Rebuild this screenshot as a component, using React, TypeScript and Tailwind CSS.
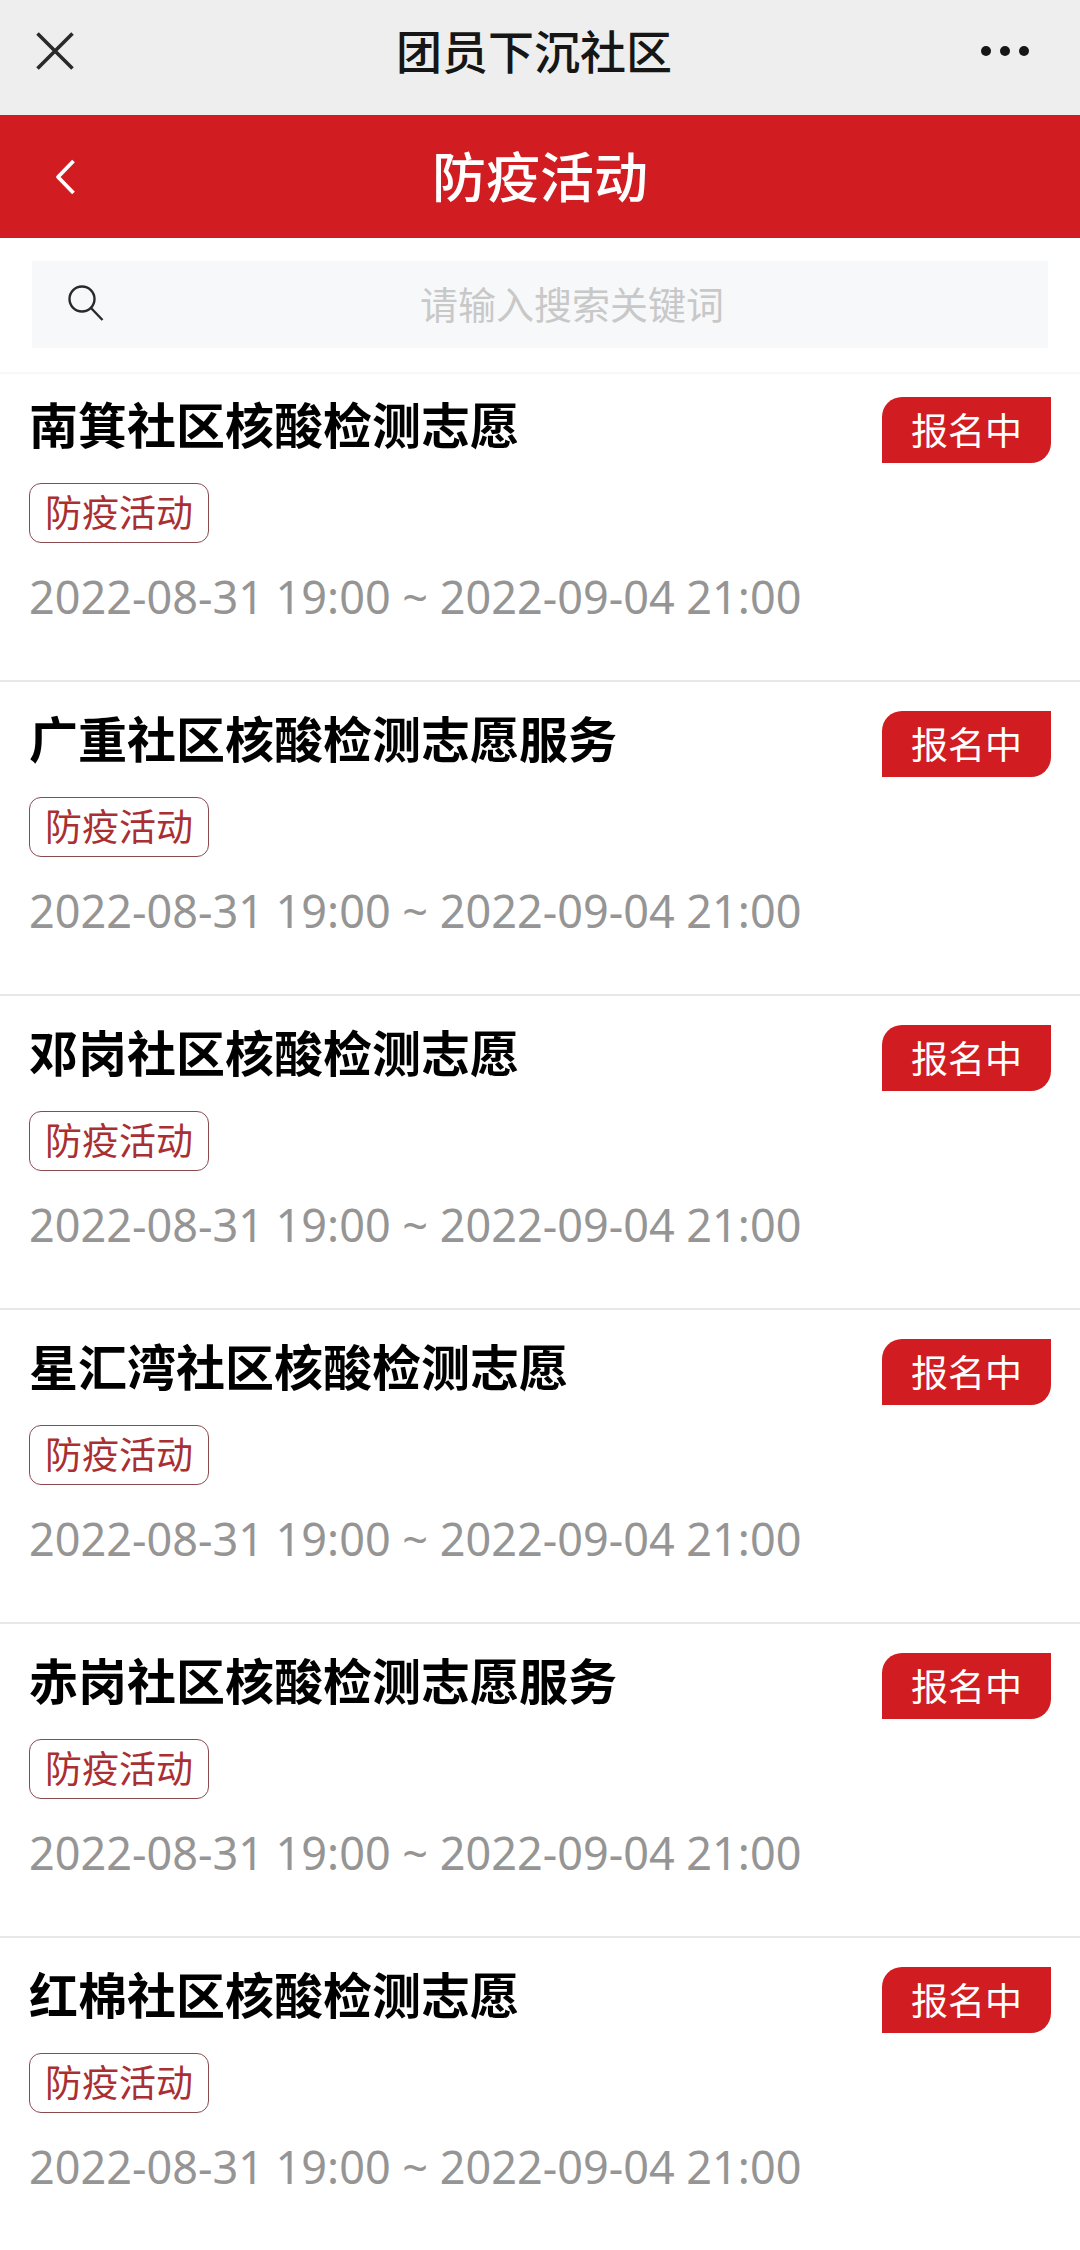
import { useState } from 'react'

const activities = [
  { id: 1, title: '南箕社区核酸检测志愿' },
  { id: 2, title: '广重社区核酸检测志愿服务' },
  { id: 3, title: '邓岗社区核酸检测志愿' },
  { id: 4, title: '星汇湾社区核酸检测志愿' },
  { id: 5, title: '赤岗社区核酸检测志愿服务' },
  { id: 6, title: '红棉社区核酸检测志愿' },
]

function TitleBar() {
  return (
    <header className="grid h-[115px] grid-cols-[1fr_auto_1fr] items-center bg-[#eeeeee] pb-3.5 pl-9 pr-12 text-[#161616]">
      <button type="button" aria-label="关闭" className="justify-self-start">
        <svg width="38" height="38" viewBox="0 0 38 38" fill="none" stroke="#2a2a2a" strokeWidth="3.6">
          <path d="M1.5 1.5 36.5 36.5M36.5 1.5 1.5 36.5" />
        </svg>
      </button>
      <h1 className="pb-1 text-[46px] font-medium leading-none">团员下沉社区</h1>
      <button type="button" aria-label="更多" className="justify-self-end">
        <svg width="54" height="38" viewBox="0 0 54 38" fill="currentColor">
          <circle cx="8" cy="19" r="5" />
          <circle cx="27" cy="19" r="5" />
          <circle cx="46" cy="19" r="5" />
        </svg>
      </button>
    </header>
  )
}

function NavBar() {
  return (
    <nav className="grid h-[123px] grid-cols-[1fr_auto_1fr] items-center bg-[#d11d21] px-[54px] text-white">
      <button type="button" aria-label="返回" className="justify-self-start">
        <svg width="22" height="36" viewBox="0 0 22 36" fill="none" stroke="currentColor" strokeWidth="3.8">
          <path d="M19.5 2 4 18l15.5 16" strokeLinejoin="round" />
        </svg>
      </button>
      <h2 className="pb-1 text-[54px] font-medium leading-none">防疫活动</h2>
    </nav>
  )
}

function SearchBox() {
  const [keyword, setKeyword] = useState('')

  return (
    <div className="border-b-2 border-[#f8f8f8] px-8 pb-6 pt-[23px]">
      <label className="flex h-[87px] items-center bg-[#f7f8fa] pb-1 pl-9 pr-2.5">
        <svg width="38" height="38" viewBox="0 0 38 38" fill="none" stroke="#2a2a2a" strokeWidth="2.4">
          <circle cx="14" cy="15" r="12.5" />
          <path d="M23 24 34.5 36" />
        </svg>
        <input
          type="text"
          aria-label="搜索"
          placeholder="请输入搜索关键词"
          value={keyword}
          onChange={(e) => setKeyword(e.target.value)}
          className="min-w-0 flex-1 bg-transparent text-center text-[38px] text-[#333333] outline-none placeholder:text-[#c8c8c8]"
        />
      </label>
    </div>
  )
}

function ActivityItem({ title }: { title: string }) {
  return (
    <li className="border-b-2 border-[#e8e8e8] px-[29px] pb-[53px] pt-[29px] first:pt-[23px] last:border-b-0">
      <div className="flex items-start justify-between">
        <h3 className="text-[49px] font-bold leading-[52px] text-black">{title}</h3>
        <span className="rounded-br-[20px] rounded-tl-[20px] bg-[#d11d21] px-[29px] pb-0.5 text-[37px] leading-[64px] text-white">
          报名中
        </span>
      </div>
      <div className="mt-5 flex">
        <span className="rounded-xl border border-[#8a4a4e] px-[15px] pb-1 text-[37px] leading-[54px] text-[#a92f33]">
          防疫活动
        </span>
      </div>
      <p className="mt-6 font-['Noto_Sans',sans-serif] text-[45px] leading-[60px] text-[#959595]">
        2022-08-31 19:00 ~ 2022-09-04 21:00
      </p>
    </li>
  )
}

export default function App() {
  return (
    <div className="min-h-screen bg-white font-['Noto_Sans_CJK_SC',sans-serif]">
      <TitleBar />
      <NavBar />
      <SearchBox />
      <ul>
        {activities.map((item) => (
          <ActivityItem key={item.id} title={item.title} />
        ))}
      </ul>
    </div>
  )
}
